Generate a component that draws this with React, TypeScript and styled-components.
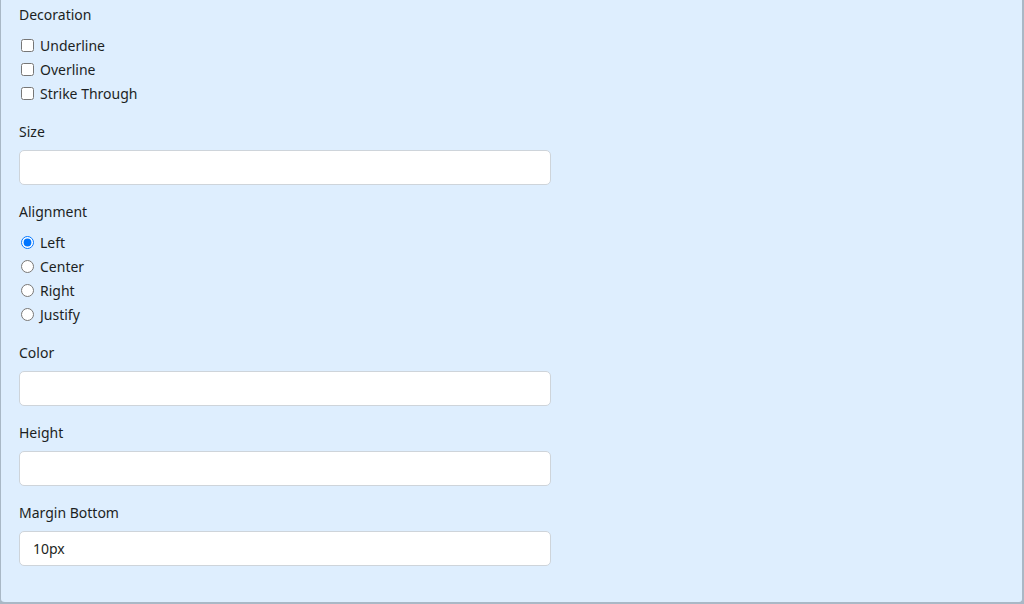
import styled, { createGlobalStyle } from "styled-components";

const GlobalStyle = createGlobalStyle`
  html, body {
    margin: 0;
    padding: 0;
    background: #a9b8c6;
  }

  body {
    font-family: "Noto Sans", "Open Sans", sans-serif;
    font-size: 14px;
    line-height: 21px;
    color: #1c1f23;
  }
`;

const decorations = ["Underline", "Overline", "Strike Through"];
const alignments = ["Left", "Center", "Right", "Justify"];

export default function App() {
  return (
    <>
      <GlobalStyle />
      <Panel>
        <Column>
          <Group>
            <Label>Decoration</Label>
            {decorations.map((item) => (
              <Check key={item}>
                <input type="checkbox" />
                <span>{item}</span>
              </Check>
            ))}
          </Group>

          <Group>
            <Label>Size</Label>
            <Input type="text" />
          </Group>

          <Group>
            <Label>Alignment</Label>
            {alignments.map((item, index) => (
              <Check key={item}>
                <input type="radio" name="align" defaultChecked={index === 0} />
                <span>{item}</span>
              </Check>
            ))}
          </Group>

          <Group>
            <Label>Color</Label>
            <Input type="text" />
          </Group>

          <Group>
            <Label>Height</Label>
            <Input type="text" />
          </Group>

          <Group>
            <Label>Margin Bottom</Label>
            <Input type="text" defaultValue="10px" />
          </Group>
        </Column>
      </Panel>
    </>
  );
}

const Panel = styled.div`
  box-sizing: border-box;
  height: 604px;
  padding: 4px 18px 0 18px;
  background: #deeefe;
  border: 1px solid #a9b8c6;
  border-top: none;
  border-right-width: 2px;
  border-bottom-width: 2px;
  border-radius: 0 0 5px 5px;
`;

const Column = styled.div`
  width: 532px;
`;

const Group = styled.div`
  margin-bottom: 16px;
`;

const Label = styled.label`
  display: block;
  margin-bottom: 8px;
`;

const Check = styled.label`
  display: flex;
  align-items: center;
  gap: 6px;
  height: 24px;

  input {
    margin: 0 0 0 2px;
    width: 13px;
    height: 13px;
  }
`;

const Input = styled.input`
  display: block;
  box-sizing: border-box;
  width: 100%;
  height: 35px;
  padding: 6px 13px;
  font-family: inherit;
  font-size: 14px;
  color: #1c1f23;
  background: #fff;
  border: 1px solid #ced4da;
  border-radius: 5px;
  outline: none;
`;
